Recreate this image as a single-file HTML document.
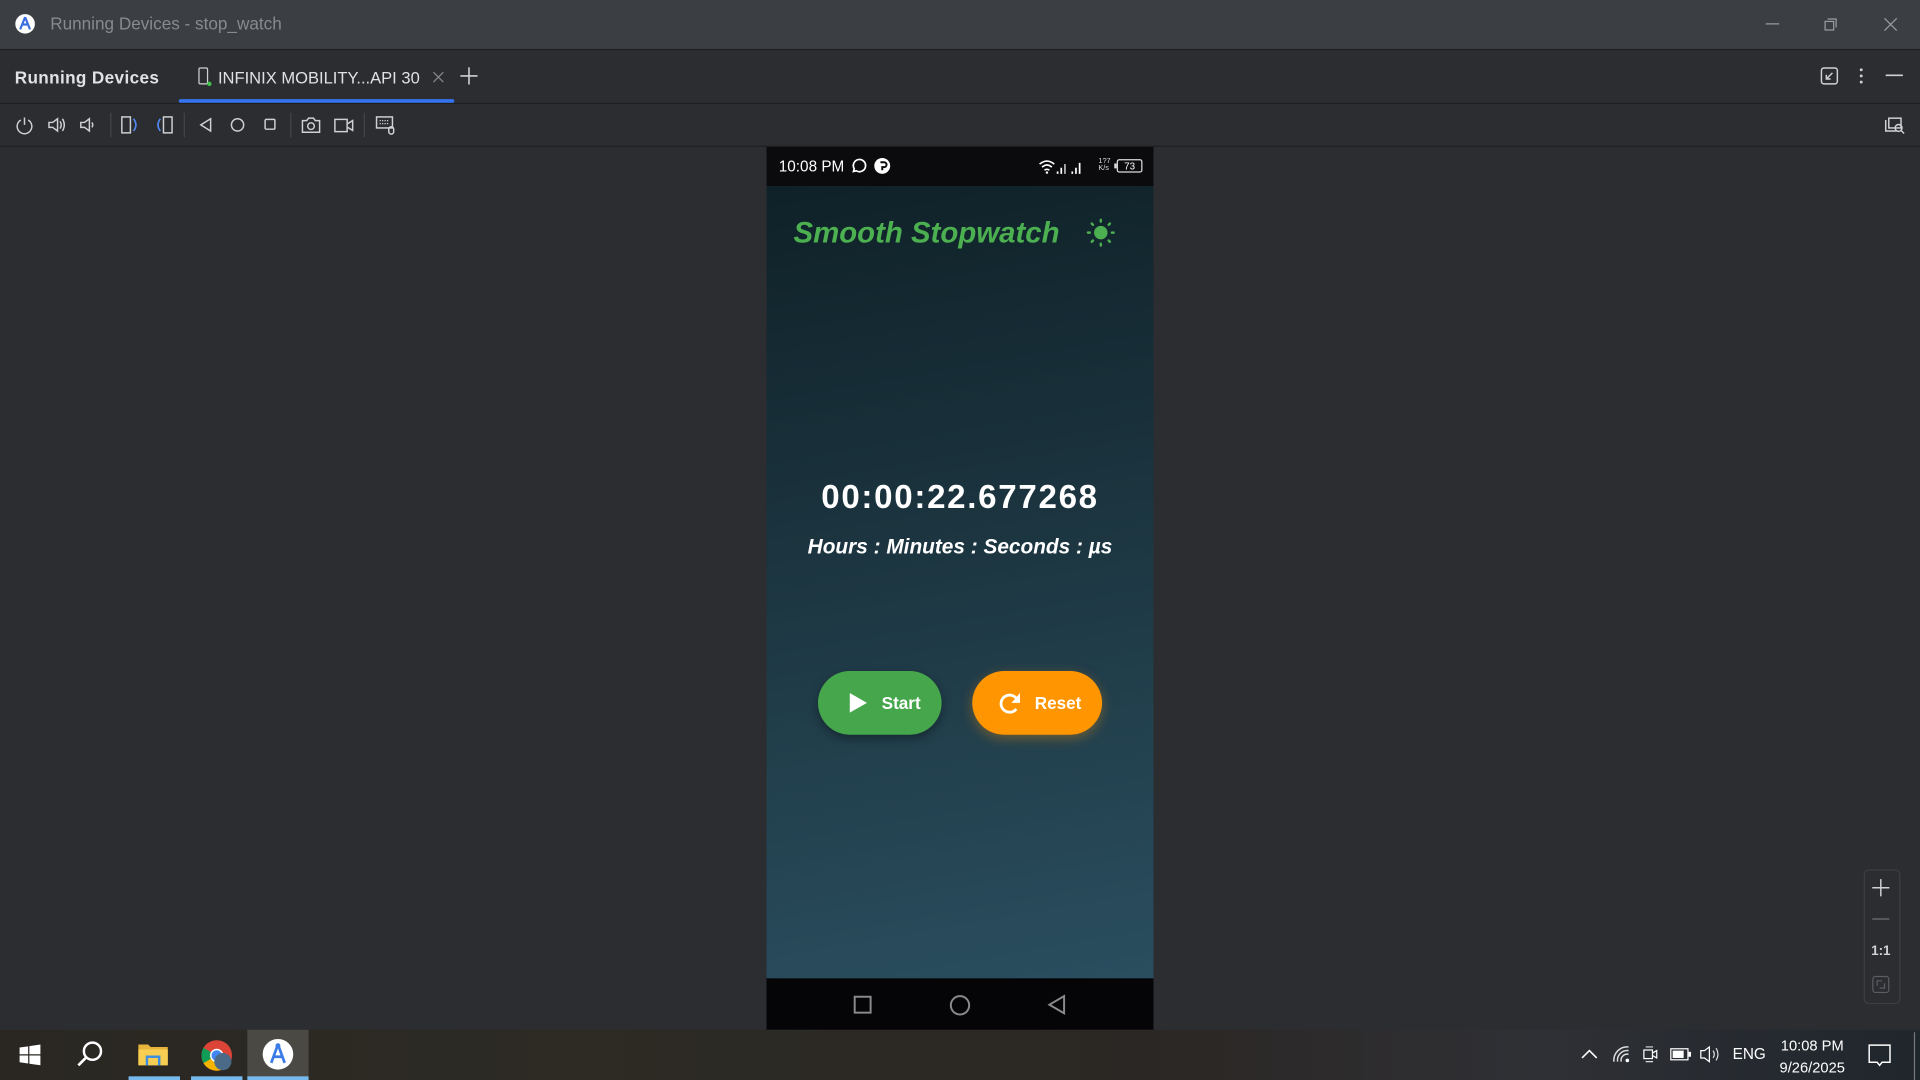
<!DOCTYPE html>
<html><head><meta charset="utf-8"><style>
html,body{margin:0;padding:0;width:1920px;height:1080px;overflow:hidden;background:#2b2d30}
#w{position:absolute;left:0;top:0;width:1568px;height:882px;transform:scale(1.22449);transform-origin:0 0;font-family:"Liberation Sans",sans-serif;background:#2b2d30}
.a{position:absolute}
svg{position:absolute;overflow:visible}
.ic{stroke:#cfd1d4;fill:none;stroke-width:1.2}
</style></head><body><div id="w">
<div class="a" style="left:0;top:0;width:1568px;height:40px;background:#3b3e42"></div>
<svg style="left:12px;top:11px" width="17" height="17"><circle cx="8.5" cy="8.5" r="8" fill="#fff"/><path d="M8.5 3 L4.5 13 M8.5 3 L12.5 13 M5.5 9 H11.5" stroke="#3b6fe0" stroke-width="1.8" fill="none"/></svg>
<div class="a" style="left:41px;top:11px;font-size:14px;color:#878a8e">Running Devices - stop_watch</div>
<svg style="left:1442px;top:19px" width="12" height="2"><path d="M0 .5H11" stroke="#9a9da1"/></svg>
<svg style="left:1489px;top:14px" width="12" height="12"><rect x="1.5" y="3.5" width="7" height="7" stroke="#9a9da1" fill="none"/><path d="M3.5 1.5H10.5V8.5" stroke="#9a9da1" fill="none"/></svg>
<svg style="left:1538px;top:14px" width="12" height="12"><path d="M1 1L11 11M11 1L1 11" stroke="#9a9da1"/></svg>
<div class="a" style="left:0;top:40px;width:1568px;height:1px;background:#1e1f22"></div>
<div class="a" style="left:12px;top:55px;font-size:14px;color:#dfe1e5;font-weight:bold;letter-spacing:.3px">Running Devices</div>
<svg style="left:161px;top:55px" width="12" height="16"><rect x="1.5" y=".5" width="7" height="13" rx="1" stroke="#cfd1d4" fill="none"/><circle cx="10" cy="13.5" r="1.8" fill="#3fc24a"/></svg>
<div class="a" style="left:178px;top:56px;font-size:13.5px;color:#dfe1e5">INFINIX MOBILITY...API 30</div>
<svg style="left:354px;top:59px" width="8" height="8"><path d="M0 0L8 8M8 0L0 8" stroke="#86898d"/></svg>
<svg style="left:376px;top:55px" width="14" height="14"><path d="M7 0V14M0 7H14" stroke="#cfd1d4" stroke-width="1.3"/></svg>
<div class="a" style="left:146px;top:81px;width:225px;height:3px;border-radius:2px;background:#3574f0"></div>
<svg style="left:1487px;top:55px" width="14" height="14"><rect x=".5" y=".5" width="13" height="13" rx="2" class="ic"/><path d="M9.5 4.5L4.5 9.5M4.5 6V9.5H8" class="ic"/></svg>
<svg style="left:1518px;top:55px" width="4" height="14"><circle cx="2" cy="2" r="1.2" fill="#cfd1d4"/><circle cx="2" cy="7" r="1.2" fill="#cfd1d4"/><circle cx="2" cy="12" r="1.2" fill="#cfd1d4"/></svg>
<svg style="left:1540px;top:61px" width="14" height="2"><path d="M0 .5H14" stroke="#cfd1d4" stroke-width="1.3"/></svg>
<div class="a" style="left:0;top:84px;width:1568px;height:1px;background:#1e1f22"></div>
<svg style="left:13px;top:95px" width="14" height="14"><path d="M4 3A6 6 0 1 0 10 3M7 1V7" class="ic"/></svg>
<svg style="left:39px;top:95px" width="16" height="14"><path d="M1 5H4L8 2V12L4 9H1Z M10 4Q12 7 10 10 M12 2Q15 7 12 12" class="ic"/></svg>
<svg style="left:65px;top:95px" width="14" height="14"><path d="M1 5H4L8 2V12L4 9H1Z M10 5Q11.5 7 10 9" class="ic"/></svg>
<div class="a" style="left:90px;top:92px;width:1px;height:20px;background:#43454a"></div>
<svg style="left:99px;top:95px" width="16" height="14"><rect x=".5" y=".5" width="7" height="13" class="ic"/><path d="M10 2Q14 7 10 12" stroke="#548af7" fill="none" stroke-width="1.3"/></svg>
<svg style="left:126px;top:95px" width="16" height="14"><rect x="7.5" y=".5" width="7" height="13" class="ic"/><path d="M5 2Q1 7 5 12" stroke="#548af7" fill="none" stroke-width="1.3"/></svg>
<div class="a" style="left:150px;top:92px;width:1px;height:20px;background:#43454a"></div>
<svg style="left:162px;top:96px" width="12" height="12"><path d="M10 1L2 6L10 11Z" class="ic"/></svg>
<svg style="left:188px;top:96px" width="12" height="12"><circle cx="6" cy="6" r="5" class="ic"/></svg>
<svg style="left:215px;top:96px" width="12" height="12"><rect x="1.5" y="1.5" width="8" height="8" rx="1" class="ic"/></svg>
<div class="a" style="left:237px;top:92px;width:1px;height:20px;background:#43454a"></div>
<svg style="left:246px;top:95px" width="16" height="14"><path d="M1 3.5H4.5L6 1.5H10L11.5 3.5H15V13H1Z" class="ic"/><circle cx="8" cy="8" r="2.7" class="ic"/></svg>
<svg style="left:273px;top:96px" width="16" height="12"><rect x=".5" y="1.5" width="10" height="10" class="ic"/><path d="M11 5L15 2.5V10.5L11 8" class="ic"/></svg>
<div class="a" style="left:297px;top:92px;width:1px;height:20px;background:#43454a"></div>
<svg style="left:307px;top:95px" width="16" height="16"><rect x=".5" y=".5" width="13" height="9" class="ic"/><path d="M3 3.5H11M3 6H11" stroke="#cfd1d4" stroke-dasharray="1 1"/><rect x="10.5" y="8.5" width="4" height="6" rx="2" class="ic" fill="#2b2d30"/></svg>
<svg style="left:1539px;top:94px" width="18" height="16"><rect x="3.5" y="2.5" width="10" height="8" class="ic"/><path d="M1 4V13H10" class="ic"/><circle cx="11.5" cy="10.5" r="2.8" class="ic" fill="#2b2d30"/><path d="M13.5 12.5L16 15" class="ic"/></svg>
<div class="a" style="left:0;top:119px;width:1568px;height:1px;background:#1e1f22"></div>
<div class="a" style="left:626px;top:120px;width:316px;height:32px;background:#0b0b0d"></div>
<div class="a" style="left:636px;top:129px;font-size:12.5px;color:#fff">10:08 PM</div>
<svg style="left:694px;top:129px" width="13" height="13"><path d="M3 11L3.6 8.8A5 5 0 1 1 5.3 10.5Z" stroke="#fff" stroke-width="1.4" fill="none"/></svg>
<svg style="left:714px;top:129px" width="13" height="13"><circle cx="6.5" cy="6.5" r="6.5" fill="#fff"/><path d="M5 3.5H8A2 2 0 0 1 8 7.5H6.5V10" stroke="#0b0b0d" stroke-width="1.6" fill="none"/></svg>
<svg style="left:848px;top:129px" width="48" height="14"><path d="M1 5Q7 0 13 5M3 7.5Q7 4 11 7.5M5 10Q7 8.5 9 10" stroke="#fff" fill="none" stroke-width="1.3"/><circle cx="7" cy="12" r="1" fill="#fff"/><rect x="15" y="11" width="1.4" height="2" fill="#fff"/><rect x="18" y="8" width="1.4" height="5" fill="#fff"/><rect x="21" y="5" width="1.4" height="8" fill="#bbb"/><rect x="27" y="11" width="1.4" height="2" fill="#fff"/><rect x="30" y="8" width="1.4" height="5" fill="#fff"/><rect x="33" y="4" width="1.4" height="9" fill="#fff"/></svg>
<div class="a" style="left:897px;top:129px;font-size:6px;color:#ddd;line-height:6px">1?7<br>K/s</div>
<svg style="left:910px;top:130px" width="24" height="11"><rect x="2.5" y=".5" width="20" height="10" rx="1.5" stroke="#ddd" fill="none"/><rect x="0" y="3.5" width="2" height="4" fill="#ddd"/><text x="12.5" y="8.5" font-size="8" fill="#fff" text-anchor="middle" font-family="Liberation Sans">73</text></svg>
<div class="a" style="left:626px;top:152px;width:316px;height:647px;background:linear-gradient(170deg,#0f2128 0%,#1c3540 45%,#2a4e5f 100%)"></div>
<div class="a" style="left:648px;top:177px;font-size:24px;font-weight:bold;font-style:italic;color:#4caf50">Smooth Stopwatch</div>
<svg style="left:887px;top:178px" width="24" height="24"><circle cx="12" cy="12" r="5.5" fill="#4caf50"/><g stroke="#4caf50" stroke-width="2" stroke-linecap="round"><path d="M12 1.5V3M12 21V22.5M1.5 12H3M21 12H22.5M4.6 4.6L5.6 5.6M18.4 18.4L19.4 19.4M4.6 19.4L5.6 18.4M18.4 5.6L19.4 4.6"/></g></svg>
<div class="a" style="left:626px;top:391px;width:316px;text-align:center;font-size:27px;font-weight:bold;color:#fff;letter-spacing:1.4px">00:00:22.677268</div>
<div class="a" style="left:626px;top:437px;width:316px;text-align:center;font-size:17px;font-weight:bold;font-style:italic;color:#fff">Hours : Minutes : Seconds : µs</div>
<div class="a" style="left:668px;top:548px;width:101px;height:52px;border-radius:26px;background:#46a64c;box-shadow:0 3px 8px rgba(0,0,0,.35)"></div>
<svg style="left:694px;top:566px" width="14" height="16"><path d="M0 0L14 8L0 16Z" fill="#fff"/></svg>
<div class="a" style="left:720px;top:566px;font-size:14px;font-weight:bold;color:#fff">Start</div>
<div class="a" style="left:794px;top:548px;width:106px;height:52px;border-radius:26px;background:#ff9500;box-shadow:0 3px 10px rgba(255,150,0,.35)"></div>
<svg style="left:815px;top:564px" width="20" height="20"><path d="M16 8A7 7 0 1 0 15 15" stroke="#fff" stroke-width="2.3" fill="none"/><path d="M18 2V10H11Z" fill="#fff"/></svg>
<div class="a" style="left:845px;top:566px;font-size:14px;font-weight:bold;color:#fff">Reset</div>
<div class="a" style="left:626px;top:799px;width:316px;height:42px;background:#050507"></div>
<svg style="left:697px;top:813px" width="16" height="16"><rect x="1" y="1" width="13" height="13" stroke="#8a8a8a" stroke-width="1.6" fill="none"/></svg>
<svg style="left:775px;top:812px" width="18" height="18"><circle cx="9" cy="9" r="7.5" stroke="#8a8a8a" stroke-width="1.6" fill="none"/></svg>
<svg style="left:855px;top:812px" width="16" height="18"><path d="M14 1.5L2 8.5L14 15.5Z" stroke="#8a8a8a" stroke-width="1.6" fill="none"/></svg>
<div class="a" style="left:1522px;top:710px;width:28px;height:108px;border:1px solid #3c3f44;border-radius:4px"></div>
<svg style="left:1529px;top:718px" width="14" height="14"><path d="M7 0V14M0 7H14" stroke="#cfd1d4" stroke-width="1.2"/></svg>
<svg style="left:1529px;top:750px" width="14" height="2"><path d="M0 .5H14" stroke="#6f7277"/></svg>
<div class="a" style="left:1522px;top:771px;width:28px;text-align:center;font-size:11px;font-weight:bold;color:#cfd1d4">1:1</div>
<svg style="left:1529px;top:797px" width="14" height="14"><rect x=".5" y=".5" width="13" height="13" rx="2" stroke="#5a5d62" fill="none"/><path d="M4 8V4H8M10 6V10H6" stroke="#5a5d62" fill="none"/></svg>
<div class="a" style="left:0;top:841px;width:1568px;height:41px;background:linear-gradient(90deg,#2a2722 0%,#2d2b24 30%,#2b2724 60%,#2f3035 80%,#1f262c 100%)"></div>
<svg style="left:16px;top:853px" width="17" height="17"><path d="M0 2.5L7 1.5V8H0Z M8 1.3L17 0V8H8Z M0 9H7V15.5L0 14.5Z M8 9H17V17L8 15.7Z" fill="#fff"/></svg>
<svg style="left:62px;top:849px" width="24" height="24"><circle cx="13.5" cy="9.5" r="7" stroke="#fff" stroke-width="2" fill="none"/><path d="M8.5 14.5L2 21" stroke="#fff" stroke-width="2.2"/></svg>
<svg style="left:113px;top:851px" width="24" height="20"><path d="M0 2H8L10 4H24V19H0Z" fill="#e8b33a"/><rect x="0" y="6" width="24" height="13" fill="#f7ce52"/><rect x="6" y="11" width="12" height="8" fill="#3b8ee0"/><rect x="8" y="13" width="8" height="6" fill="#f7ce52"/></svg>
<div class="a" style="left:105px;top:879px;width:42px;height:3px;background:#76b9ed"></div>
<svg style="left:164px;top:849px" width="26" height="26"><circle cx="13" cy="13" r="12.5" fill="#db4437"/><path d="M13 13L2.2 19.2A12.5 12.5 0 0 1 2.2 6.8Z" fill="#0f9d58"/><path d="M13 13L23.8 19.2A12.5 12.5 0 0 1 2.2 19.2Z" fill="#f4b400"/><circle cx="13" cy="13" r="5.5" fill="#fff"/><circle cx="13" cy="13" r="4.3" fill="#4285f4"/><circle cx="18" cy="18" r="7" fill="#4a6a88"/></svg>
<div class="a" style="left:156px;top:879px;width:42px;height:3px;background:#76b9ed"></div>
<div class="a" style="left:202px;top:841px;width:50px;height:41px;background:#4a4943"></div>
<svg style="left:214px;top:848px" width="26" height="26"><circle cx="13" cy="13" r="12.5" fill="#fff"/><path d="M13 5L7.5 20M13 5L18.5 20M9 15H17" stroke="#3b7be8" stroke-width="2.2" fill="none"/><circle cx="13" cy="6" r="2" fill="#3b7be8"/></svg>
<div class="a" style="left:202px;top:879px;width:50px;height:3px;background:#76b9ed"></div>
<svg style="left:1291px;top:856px" width="14" height="10"><path d="M1 8L7 2L13 8" stroke="#fff" stroke-width="1.3" fill="none"/></svg>
<svg style="left:1316px;top:853px" width="16" height="16"><path d="M2 14A11 11 0 0 1 14 2M5 14A8 8 0 0 1 14 5M8 14A5 5 0 0 1 14 8" stroke="#ddd" fill="none" stroke-width="1.2"/><circle cx="13" cy="13" r="1.5" fill="#fff"/></svg>
<svg style="left:1341px;top:853px" width="14" height="16"><rect x="1.5" y="4.5" width="7" height="7" stroke="#fff" fill="none"/><path d="M8.5 7L12 5V11L8.5 9" stroke="#fff" fill="none"/><path d="M3 2H9M3 14H9" stroke="#ddd"/></svg>
<svg style="left:1364px;top:856px" width="18" height="10"><rect x=".5" y=".5" width="14" height="9" stroke="#fff" fill="none"/><rect x="2" y="2" width="9" height="6" fill="#fff"/><rect x="15" y="3" width="2" height="4" fill="#fff"/></svg>
<svg style="left:1388px;top:853px" width="18" height="16"><path d="M1 5H4L8 2V14L4 11H1Z" stroke="#fff" fill="none"/><path d="M11 5Q13 8 11 11M13.5 3Q16.5 8 13.5 13" stroke="#ddd" fill="none"/></svg>
<div class="a" style="left:1415px;top:854px;font-size:12.5px;color:#fff">ENG</div>
<div class="a" style="left:1446px;top:845px;width:68px;text-align:center;font-size:12px;color:#fff;line-height:18px">10:08 PM<br>9/26/2025</div>
<svg style="left:1525px;top:852px" width="20" height="20"><path d="M1.5 1.5H18.5V15.5H12L10 18L8 15.5H1.5Z" stroke="#fff" fill="none" stroke-width="1.2"/></svg>
<div class="a" style="left:1563px;top:843px;width:1px;height:39px;background:#777"></div>
</div></body></html>
